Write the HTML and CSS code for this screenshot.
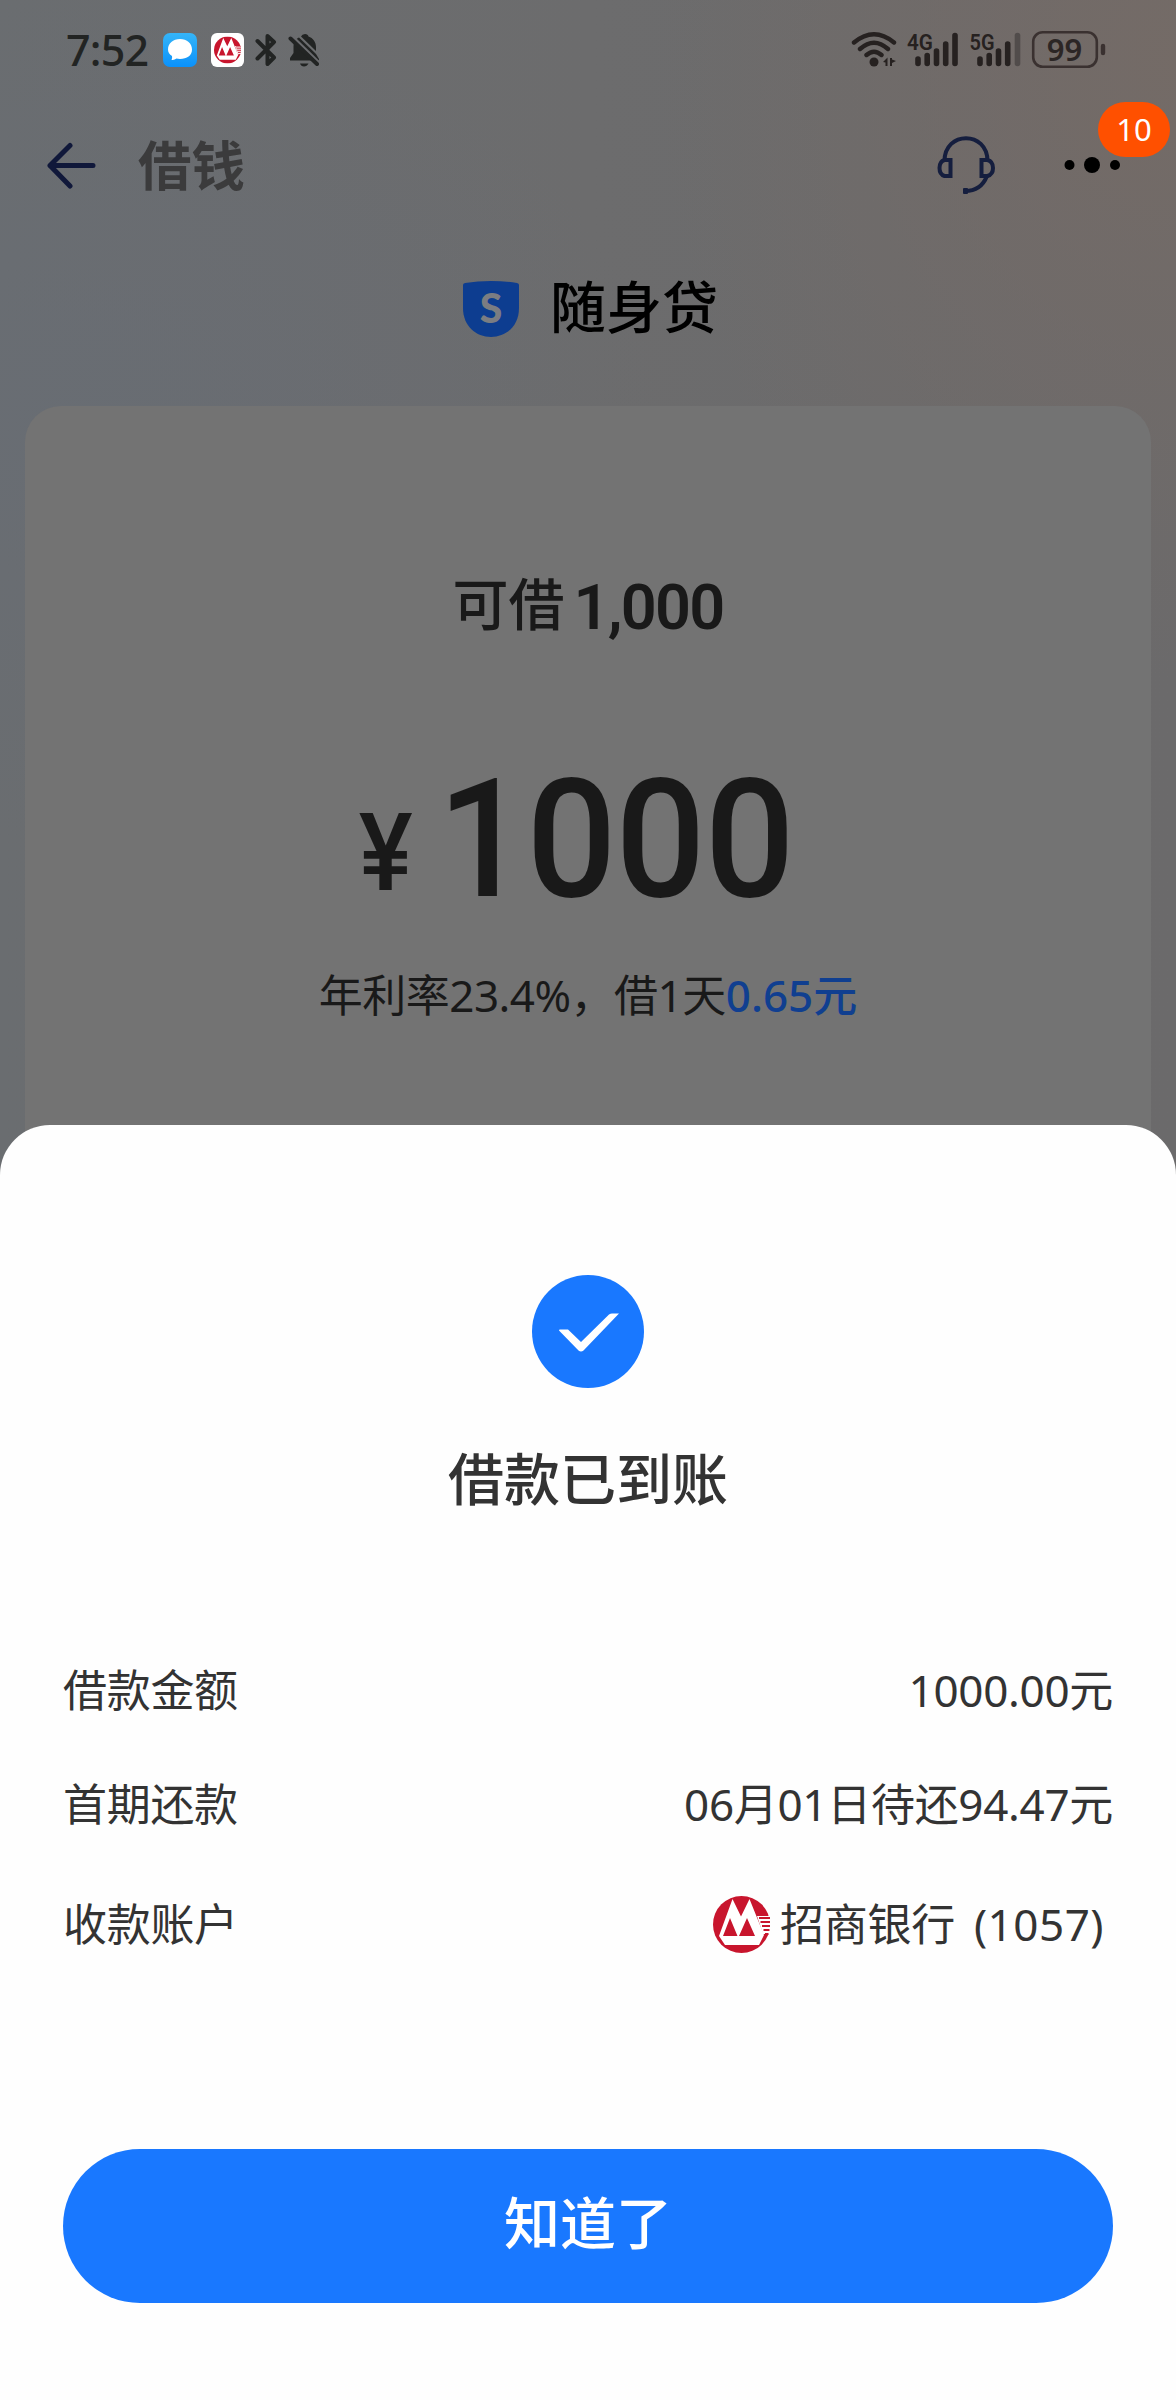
FILE: index.html
```html
<!DOCTYPE html>
<html lang="zh-CN">
<head>
<meta charset="utf-8">
<title>借钱</title>
<link rel="stylesheet" href="styles.css">
</head>
<body>
<svg class="defs" width="0" height="0" aria-hidden="true">
  <symbol id="cmb" viewBox="0 0 57 57">
    <circle cx="28.500" cy="28.500" r="28.500" fill="#c8152d"/>
    <path d="M19.500 3L28 20.500L36.500 3L51 39L46 49H12L6 40Z" fill="#fff"/>
    <path d="M44 20H57V38H50Z" fill="#fff"/>
    <path d="M17 22L24.500 40H10ZM34 22L42 40H26Z" fill="#c8152d"/>
    <path d="M46 22H57M47.500 26H57M49 30H57M50.500 34H56.500M52 38H55.500" stroke="#c8152d" stroke-width="2"/>
  </symbol>
</svg>
<div class="screen">
  <header class="status">
    <span class="clock">7:52</span>
    <svg class="msg" width="34" height="34" viewBox="0 0 34 34"><defs><linearGradient id="mg" x1="0" y1="0" x2="0" y2="1"><stop offset="0" stop-color="#35b5f8"/><stop offset="1" stop-color="#0b91fb"/></linearGradient></defs><rect width="34" height="34" rx="7" fill="url(#mg)"/><path d="M17 6C24 6 29 10.500 29 16.500S24 26 17 26C15.500 26 14.500 25.800 13.500 25.500Q11 27.500 8.500 26.800Q9.500 25.500 9 23C6.500 21.500 5 19.500 5 16.500C5 10.500 10 6 17 6Z" fill="#fff"/></svg>
    <svg class="bank-app" width="33" height="34" viewBox="0 0 33 34"><rect width="33" height="34" rx="6" fill="#fff"/><use href="#cmb" x="3" y="3.500" width="27" height="27"/></svg>
    <svg class="bt" width="22" height="36" viewBox="0 0 22 36" fill="none" stroke="#222423" stroke-width="4" stroke-linecap="round" stroke-linejoin="round"><path d="M2.500 9L19 25.500L12.500 32V4L19 10L2.500 26.500"/></svg>
    <svg class="bell" width="32" height="36" viewBox="0 0 32 36"><path d="M5.500 14C6 9 8 7 11 5.500L28 22L31 27V28.500H2V26L5.500 21Z" fill="#222423"/><path d="M13 4.500Q14 2 17 2T20.500 4.500C25 6 28 10 28 15V19Z" fill="#222423"/><path d="M12 31.500H20.500Q19 34.500 16 34.500T12 31.500" fill="#222423"/><path d="M3 3L31 30.500" stroke="#6a6b6e" stroke-width="2.600"/><path d="M2.500 6.500L29 32" stroke="#222423" stroke-width="4" stroke-linecap="round"/></svg>
    <svg class="signals" width="260" height="44" viewBox="850 28 260 44">
      <g fill="none" stroke="#262120" stroke-width="4.400" stroke-linecap="round"><path d="M854 42.500Q874 26 894 42.500M860 49Q874 36.500 888 49M866.500 55Q874 48.500 881.500 55"/></g>
      <circle cx="874" cy="62" r="4.500" fill="#262120"/>
      <path d="M883 62L887.500 57.500V66H885.500V62.500ZM890 58V66H892V63L896 61L892 59.500V58Z" fill="#262120"/>
      <g class="net" fill="#262120"><text x="907" y="49.500" textLength="26" lengthAdjust="spacingAndGlyphs">4G</text><text x="969.500" y="49.500" textLength="25" lengthAdjust="spacingAndGlyphs">5G</text></g>
      <g stroke="#262120" stroke-width="5.600" stroke-linecap="round"><path d="M918 59V63.500M927.200 55.500V63.500M936.500 51V63.500M945.700 44V63.500M955 35.500V63.500M980 59V63.500M989.200 55.500V63.500M998.500 51V63.500M1007.700 44V63.500"/><path d="M1017.500 35.500V63.500" stroke="#514c4b"/></g>
      <rect x="1033.200" y="32.200" width="63.600" height="34.600" rx="9.500" fill="none" stroke="#3a3130" stroke-width="2.600"/>
      <path d="M1103 46V53" stroke="#3a3130" stroke-width="4.400" stroke-linecap="round"/>
      <text class="pct" x="1064.500" y="61" text-anchor="middle">99</text>
    </svg>
  </header>
  <nav class="nav">
    <svg class="back" width="52" height="48" viewBox="0 0 52 48" fill="none" stroke="#10183a" stroke-width="5" stroke-linecap="round" stroke-linejoin="round"><path d="M24 4.500L4 24.500L24 45M4 24.500H47"/></svg>
    <h1>借钱</h1>
    <svg class="headset" width="60" height="60" viewBox="0 0 60 60" fill="none" stroke="#151e3e" stroke-width="4"><path d="M8.500 26C8.500 -4.500 51.500 -4.500 51.500 26M51 41Q45 56 29 56"/><rect x="27" y="53" width="5" height="6" rx="1" fill="#151e3e" stroke="none"/><path d="M14.500 25H8.500Q3.500 26.500 3.500 33T8.500 41H14.500ZM45.500 25H51.500Q57 26.500 57 33T51.500 41H45.500Z"/></svg>
    <div class="more">
      <svg width="58" height="18" viewBox="0 0 58 18"><circle cx="6.500" cy="9" r="5"/><circle cx="29" cy="9" r="8"/><circle cx="52" cy="9" r="5"/></svg>
      <span class="badge">10</span>
    </div>
  </nav>
  <div class="brand">
    <svg width="58" height="58" viewBox="0 0 58 58"><path d="M1 5Q1 3.500 3 3C20 .3 38 .3 55 3Q57 3.500 57 5V28C57 46 44 57 29 57S1 46 1 28Z" fill="#0d3d90"/><text class="brand-s" x="29" y="43" text-anchor="middle">S</text></svg>
    <span>随身贷</span>
  </div>
  <main class="card">
    <p class="avail"><span>可借</span><b>1,000</b></p>
    <p class="amount"><span class="yen">¥</span><span class="num">1000</span></p>
    <p class="rate">年利率23.4%，借1天<b>0.65元</b></p>
  </main>
  <section class="sheet">
    <svg class="ok" width="112" height="113" viewBox="0 0 112 113"><ellipse cx="56" cy="56.500" rx="56" ry="56.500" fill="#1978ff"/><path d="M27.500 54.500H36L49 67L77 39.500Q78.500 38.500 80 38.500H87L51.500 75.500Q49 77.500 46.500 75.500L27 55.500Z" fill="#fff"/></svg>
    <h2>借款已到账</h2>
    <dl>
      <div class="row"><dt>借款金额</dt><dd>1000.00元</dd></div>
      <div class="row"><dt>首期还款</dt><dd>06月01日待还94.47元</dd></div>
      <div class="row"><dt>收款账户</dt><dd class="bank"><svg width="57" height="57"><use href="#cmb"/></svg><span>招商银行</span><span class="tail">(1057)</span></dd></div>
    </dl>
    <button type="button">知道了</button>
  </section>
</div>
</body>
</html>
```
FILE: styles.css
```css
* { box-sizing: border-box; margin: 0; padding: 0; }
body {
  font-family: "Noto Sans", "Noto Sans CJK SC", sans-serif;
  color: #333;
  background: #6b6c6e;
}
.defs { position: absolute; }
svg { display: block; flex: none; }
.screen {
  width: 1176px;
  height: 2400px;
  display: flex;
  flex-direction: column;
  overflow: hidden;
  background:
    radial-gradient(ellipse 520px 620px at 1176px 60px, rgba(117, 107, 102, .9), rgba(110, 107, 106, 0)),
    radial-gradient(ellipse 600px 420px at 60px 420px, rgba(104, 109, 116, .8), rgba(105, 108, 113, 0)),
    linear-gradient(90deg, #6a6d70, #6c6c6d 50%, #6b6a6b);
}
.status {
  height: 100px;
  display: flex;
  align-items: center;
  padding: 0 66px;
}
.clock { width: 97px; font-size: 43px; line-height: 60px; color: #222423; letter-spacing: -.8px; font-weight: 500; white-space: nowrap; }
.bank-app { margin-left: 14px; }
.bt { margin-left: 11px; }
.bell { margin-left: 11px; }
.signals { margin-left: auto; }
.net { font: 600 22px Roboto, sans-serif; }
.pct { font: 600 31px "Noto Sans", sans-serif; fill: #2c2625; }
.nav {
  height: 130px;
  display: flex;
  align-items: center;
  padding: 0 55px 0 46px;
}
.nav h1 { margin-left: 40px; padding-top: 2px; font-size: 53.5px; line-height: 70px; font-weight: 700; color: #3b3b3c; }
.headset { margin-left: auto; }
.more { position: relative; margin-left: 67px; }
.badge {
  position: absolute;
  left: 35px;
  top: -54px;
  width: 72px;
  height: 55px;
  border-radius: 28px;
  background: #ff5000;
  color: #fff;
  font-size: 31px;
  line-height: 55px;
  text-align: center;
}
.brand {
  height: 176px;
  display: flex;
  align-items: center;
  justify-content: center;
  gap: 30px;
  padding: 0 0 18px 4px;
  font-size: 56px;
  line-height: 74px;
  font-weight: 500;
  color: #000;
}
.brand span { padding-bottom: 6px; }
.brand-s { font: 900 41px Lato, sans-serif; fill: #7b7d82; }
.card {
  margin: 0 25px;
  height: 900px;
  flex: none;
  padding-top: 158px;
  border-radius: 36px 36px 0 0;
  background: #737373;
  color: #191919;
}
.avail {
  height: 84px;
  display: flex;
  justify-content: center;
  align-items: center;
  gap: 9px;
  font-size: 56px;
  line-height: 80px;
  font-weight: 500;
}
.avail span { padding-bottom: 6px; }
.avail b { font: 600 63px/84px Roboto, sans-serif; padding-top: 3px; letter-spacing: -1.8px; }
.amount {
  margin-top: 92px;
  height: 200px;
  display: flex;
  justify-content: center;
  align-items: center;
  font-family: Roboto, sans-serif;
  font-weight: 500;
  padding-right: 18px;
}
.yen { font-size: 108px; line-height: 200px; padding-top: 26px; transform: scaleX(.94); }
.num { font-size: 165px; line-height: 200px; letter-spacing: -1px; margin-left: 16px; transform: scaleX(.96); }
.rate { margin-top: 25px; font-size: 44px; line-height: 60px; text-align: center; letter-spacing: -.5px; }
.rate b { color: #103f90; font-weight: 500; letter-spacing: 0; }
.sheet {
  position: absolute;
  left: 0;
  top: 1125px;
  width: 1176px;
  height: 1275px;
  padding: 150px 63px 0;
  border-radius: 50px 50px 0 0;
  background: #fefefe;
}
.ok { margin: 0 auto; }
.sheet h2 { margin-top: 50px; font-size: 56px; line-height: 80px; font-weight: 500; text-align: center; }
dl { margin-top: 137px; font-size: 44px; line-height: 70px; }
.row { display: flex; justify-content: space-between; align-items: center; height: 70px; }
.row + .row { margin-top: 44px; }
.row:last-child { margin-top: 50px; }
.row dt, .row dd { letter-spacing: -.300px; white-space: nowrap; }
.bank { display: flex; align-items: center; }
.bank svg { margin-right: 10px; }
.tail { margin: 0 9px 0 19px; letter-spacing: .5px; }
button {
  display: block;
  width: 1050px;
  height: 154px;
  margin-top: 190px;
  border: 0;
  border-radius: 77px;
  background: #1978ff;
  color: #fff;
  font: 500 56px/146px "Noto Sans", "Noto Sans CJK SC", sans-serif;
  padding-bottom: 8px;
}
```
